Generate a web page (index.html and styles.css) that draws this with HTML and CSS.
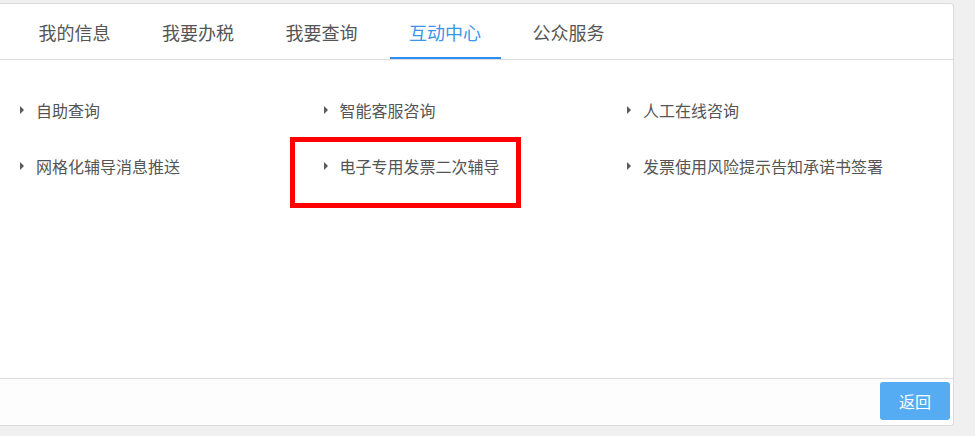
FILE: index.html
```html
<!DOCTYPE html>
<html lang="zh-CN">
<head>
<meta charset="utf-8">
<title>互动中心</title>
<link rel="stylesheet" href="styles.css">
</head>
<body>
<div class="card">
  <div class="tabs">
    <div class="tab">我的信息</div>
    <div class="tab">我要办税</div>
    <div class="tab">我要查询</div>
    <div class="tab active">互动中心</div>
    <div class="tab">公众服务</div>
  </div>
  <div class="body">
    <ul class="list">
      <li class="item"><span class="arrow"></span>自助查询</li>
      <li class="item"><span class="arrow"></span>智能客服咨询</li>
      <li class="item"><span class="arrow"></span>人工在线咨询</li>
      <li class="item"><span class="arrow"></span>网格化辅导消息推送</li>
      <li class="item marked"><span class="arrow"></span>电子专用发票二次辅导<span class="highlight"></span></li>
      <li class="item"><span class="arrow"></span>发票使用风险提示告知承诺书签署</li>
    </ul>
  </div>
  <div class="footer">
    <button class="btn">返回</button>
  </div>
</div>
</body>
</html>
```
FILE: styles.css
```css
* { box-sizing: border-box; }
html, body { margin: 0; padding: 0; }
body {
  background: #f0f0f0;
  font-family: "Noto Sans CJK SC", "Noto Sans", sans-serif;
  color: #555;
}
.card {
  margin-top: 3px;
  width: 954px;
  height: 423px;
  background: #fff;
  border: 1px solid #dcdcdc;
  border-left: none;
  border-radius: 0 4px 4px 0;
  display: flex;
  flex-direction: column;
}
.tabs {
  height: 56px;
  border-bottom: 1px solid #dddddd;
  display: flex;
  padding-left: 19px;
}
.tab {
  padding: 1px 19.5px 0;
  margin-right: 12.5px;
  font-size: 18px;
  line-height: 54px;
  height: 55px;
  color: #555;
  border-bottom: 2px solid transparent;
  white-space: nowrap;
}
.tab.active {
  color: #3a96ea;
  border-bottom-color: #2d8cf0;
}
.body {
  flex: 1;
  padding-top: 22px;
}
.list {
  list-style: none;
  margin: 0;
  padding: 0 0 0 20px;
  display: grid;
  grid-template-columns: 303.5px 303.5px 303.5px;
  grid-auto-rows: 56px;
}
.item {
  position: relative;
  display: flex;
  align-items: center;
  font-size: 16px;
  color: #555;
  white-space: nowrap;
}
.arrow {
  width: 0;
  height: 0;
  border-left: 4px solid #5a5a5a;
  border-top: 4px solid transparent;
  border-bottom: 4px solid transparent;
  margin-right: 12px;
}
.highlight {
  position: absolute;
  left: -33.5px;
  top: -1px;
  width: 231px;
  height: 71px;
  border: 5px solid #ff0000;
}
.footer {
  height: 47px;
  border-top: 1px solid #dddddd;
  background: #fdfdfd;
  display: flex;
  justify-content: flex-end;
  align-items: flex-start;
  padding: 3px 3px 0 0;
  border-radius: 0 0 4px 0;
}
.btn {
  width: 70px;
  height: 38px;
  border: none;
  border-radius: 3px;
  background: #55acf3;
  color: #fff;
  font-family: "Noto Sans CJK SC", sans-serif;
  font-size: 16px;
  padding: 0;
}
```
